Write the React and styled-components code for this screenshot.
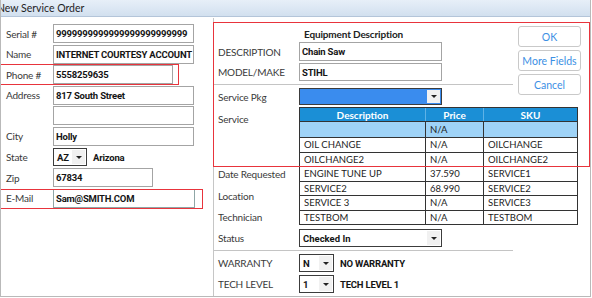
import styled, { createGlobalStyle } from "styled-components";

const GlobalStyle = createGlobalStyle`
  html, body {
    margin: 0;
    padding: 0;
    background: #ffffff;
  }
  body {
    font-family: Lato, "Open Sans", sans-serif;
    font-size: 10px;
    color: #333333;
  }
`;

const valueFont = `Roboto, Lato, sans-serif`;

const Window = styled.div`
  position: relative;
  width: 591px;
  height: 297px;
  box-sizing: border-box;
  border: 1px solid #b9b9b9;
  border-top: none;
  display: flex;
  flex-direction: column;
  overflow: hidden;
  background: #ffffff;
`;

const TitleBar = styled.div`
  flex: none;
  height: 16px;
  margin: 0 -1px 1px -1px;
  background: linear-gradient(#e7eff8, #d2e0ef);
  border-bottom: 1px solid #b4c5d9;
  display: flex;
  align-items: center;
  font-size: 10.5px;
  color: #1e1e1e;

  span {
    margin-left: -3px;
  }
`;

const Body = styled.div`
  flex: 1;
  display: flex;
`;

const LeftPanel = styled.div`
  width: 212px;
  flex: none;
  box-sizing: border-box;
  padding: 6px 0 0 5px;
  display: grid;
  grid-template-columns: 47px auto;
  grid-auto-rows: 19px;
  row-gap: 1.6px;
  align-content: start;
  align-items: center;
`;

const Label = styled.div`
  font-size: 10px;
  letter-spacing: -0.2px;
  color: #3a3a3a;
  white-space: nowrap;
`;

const Field = styled.div`
  width: ${(p) => p.$w}px;
  height: ${(p) => p.$h || 19}px;
  box-sizing: border-box;
  border: 1px solid ${(p) => p.$border || "#a4a4a4"};
  padding-left: 2px;
  display: flex;
  align-items: center;
  font-family: ${valueFont};
  font-weight: 700;
  font-size: 9.5px;
  letter-spacing: -0.2px;
  color: #151515;
  white-space: nowrap;
  overflow: hidden;
`;

const SelectRow = styled.div`
  display: flex;
  align-items: center;
  gap: 6px;
  font-family: ${valueFont};
  font-weight: 700;
  font-size: 9.5px;
  letter-spacing: -0.2px;
  color: #151515;
`;

const Select = styled.div`
  width: ${(p) => p.$w}px;
  height: ${(p) => p.$h || 18}px;
  box-sizing: border-box;
  border: 1px solid #3c3c3c;
  background: ${(p) => p.$fill || "#ffffff"};
  display: flex;
  align-items: stretch;
  font-family: ${valueFont};
  font-weight: 700;
  font-size: 9.5px;
  color: #151515;
`;

const SelectValue = styled.div`
  flex: 1;
  display: flex;
  align-items: center;
  padding-left: 3px;
  white-space: nowrap;
`;

const Arrow = styled.div`
  width: 13px;
  margin: 1px;
  background: #f1f1f1;
  display: flex;
  align-items: center;
  justify-content: center;

  &::after {
    content: "";
    border-left: 3px solid transparent;
    border-right: 3px solid transparent;
    border-top: 3px solid #222222;
  }
`;

const MidPanel = styled.div`
  flex: 1;
  border-left: 1px solid #c6c6c6;
  padding: 4px 0 0 4px;
  display: flex;
  flex-direction: column;
`;

const TopSection = styled.div`
  display: flex;
  gap: 5px;
`;

const FieldsBlock = styled.div`
  width: 295px;
  display: flex;
  flex-direction: column;
`;

const FormRow = styled.div`
  display: grid;
  grid-template-columns: 81px auto;
  align-items: center;
  margin-top: ${(p) => p.$mt || 0}px;
`;

const Heading = styled.div`
  grid-column: 2;
  padding: 6px 0 0 5px;
  height: 14px;
  font-weight: 700;
  font-size: 10px;
  letter-spacing: -0.15px;
  color: #222222;
`;

const Separator = styled.div`
  height: 1px;
  width: ${(p) => p.$w}px;
  margin: 3px 0 3px -4px;
  background: #c4c4c4;
`;

const ButtonStack = styled.div`
  width: 63px;
  padding-top: 4px;
  display: flex;
  flex-direction: column;
  gap: 3px;
`;

const Button = styled.button`
  height: 21px;
  padding: 0;
  background: #ffffff;
  border: 1px solid #c9c9c9;
  border-radius: 3px;
  font-family: Lato, "Open Sans", sans-serif;
  font-size: 10.5px;
  color: #3c8fe4;
`;

const ServiceSection = styled.div`
  display: grid;
  grid-template-columns: 81px 279px;
  margin-top: 2px;
`;

const SideLabels = styled.div`
  display: flex;
  flex-direction: column;
`;

const SideLabel = styled(Label)`
  line-height: 12px;
  margin-top: ${(p) => p.$mt}px;
`;

const Table = styled.div`
  border: 1px solid #333333;
  display: grid;
  grid-template-columns: 125px 58px auto;
`;

const HeadCell = styled.div`
  height: 13px;
  background: #1b8fd6;
  color: #ffffff;
  font-weight: 700;
  font-size: 10px;
  display: flex;
  align-items: center;
  justify-content: center;
  border-left: ${(p) => (p.$first ? "none" : "1px solid #5fb2e6")};
`;

const Cell = styled.div`
  height: ${(p) => (p.$light ? 15 : 13.5)}px;
  background: ${(p) => (p.$light ? "#9fd3f7" : "#ffffff")};
  border-top: 1px solid #333333;
  border-left: ${(p) => (p.$first ? "none" : "1px solid #333333")};
  padding-left: 4px;
  display: flex;
  align-items: center;
  font-size: 9.5px;
  color: #1c1c1c;
  white-space: nowrap;
`;

const Mark = styled.div`
  position: absolute;
  left: ${(p) => p.$x}px;
  top: ${(p) => p.$y}px;
  width: ${(p) => p.$w}px;
  height: ${(p) => p.$h}px;
  box-sizing: border-box;
  border: 1.5px solid #e8343c;
  pointer-events: none;
`;

const services = [
  ["OIL CHANGE", "N/A", "OILCHANGE"],
  ["OILCHANGE2", "N/A", "OILCHANGE2"],
  ["ENGINE TUNE UP", "37.590", "SERVICE1"],
  ["SERVICE2", "68.990", "SERVICE2"],
  ["SERVICE 3", "N/A", "SERVICE3"],
  ["TESTBOM", "N/A", "TESTBOM"],
];

export default function App() {
  return (
    <>
      <GlobalStyle />
      <Window>
        <TitleBar>
          <span>New Service Order</span>
        </TitleBar>
        <Body>
          <LeftPanel>
            <Label>Serial #</Label>
            <Field $w={141}>9999999999999999999999999</Field>
            <Label>Name</Label>
            <Field $w={141}>INTERNET COURTESY ACCOUNT</Field>
            <Label>Phone #</Label>
            <Field $w={120}>5558259635</Field>
            <Label>Address</Label>
            <Field $w={141}>817 South Street</Field>
            <Label />
            <Field $w={141} />
            <Label>City</Label>
            <Field $w={141}>Holly</Field>
            <Label>State</Label>
            <SelectRow>
              <Select $w={34}>
                <SelectValue>AZ</SelectValue>
                <Arrow />
              </Select>
              Arizona
            </SelectRow>
            <Label>Zip</Label>
            <Field $w={100}>67834</Field>
            <Label>E-Mail</Label>
            <Field $w={142} $border="#8fa6a6">
              Sam@SMITH.COM
            </Field>
          </LeftPanel>

          <MidPanel>
            <TopSection>
              <FieldsBlock>
                <FormRow>
                  <Heading>Equipment Description</Heading>
                </FormRow>
                <FormRow>
                  <Label>DESCRIPTION</Label>
                  <Field $w={143}>Chain Saw</Field>
                </FormRow>
                <FormRow $mt={2}>
                  <Label>MODEL/MAKE</Label>
                  <Field $w={143} $h={18}>
                    STIHL
                  </Field>
                </FormRow>
                <Separator $w={299} />
                <FormRow>
                  <Label>Service Pkg</Label>
                  <Select $w={143} $h={17} $fill="#3a8cee">
                    <SelectValue />
                    <Arrow />
                  </Select>
                </FormRow>
              </FieldsBlock>
              <ButtonStack>
                <Button>OK</Button>
                <Button>More Fields</Button>
                <Button>Cancel</Button>
              </ButtonStack>
            </TopSection>

            <ServiceSection>
              <SideLabels>
                <SideLabel $mt={6}>Service</SideLabel>
                <SideLabel $mt={43}>Date Requested</SideLabel>
                <SideLabel $mt={10}>Location</SideLabel>
                <SideLabel $mt={9}>Technician</SideLabel>
              </SideLabels>
              <Table>
                <HeadCell $first>Description</HeadCell>
                <HeadCell>Price</HeadCell>
                <HeadCell>SKU</HeadCell>
                <Cell $first $light />
                <Cell $light>N/A</Cell>
                <Cell $light />
                {services.map(([desc, price, sku]) => (
                  <>
                    <Cell $first key={desc}>
                      {desc}
                    </Cell>
                    <Cell>{price}</Cell>
                    <Cell>{sku}</Cell>
                  </>
                ))}
              </Table>
            </ServiceSection>

            <FormRow $mt={4}>
              <Label>Status</Label>
              <Select $w={143}>
                <SelectValue>Checked In</SelectValue>
                <Arrow />
              </Select>
            </FormRow>
            <Separator $w={299} />
            <FormRow>
              <Label>WARRANTY</Label>
              <SelectRow>
                <Select $w={35}>
                  <SelectValue>N</SelectValue>
                  <Arrow />
                </Select>
                NO WARRANTY
              </SelectRow>
            </FormRow>
            <FormRow $mt={3}>
              <Label>TECH LEVEL</Label>
              <SelectRow>
                <Select $w={35}>
                  <SelectValue>1</SelectValue>
                  <Arrow />
                </Select>
                TECH LEVEL 1
              </SelectRow>
            </FormRow>
          </MidPanel>
        </Body>

        <Mark $x={-2} $y={64} $w={180} $h={21} />
        <Mark $x={-2} $y={189} $w={204} $h={20} />
        <Mark $x={212} $y={22} $w={377} $h={145} />
      </Window>
    </>
  );
}
